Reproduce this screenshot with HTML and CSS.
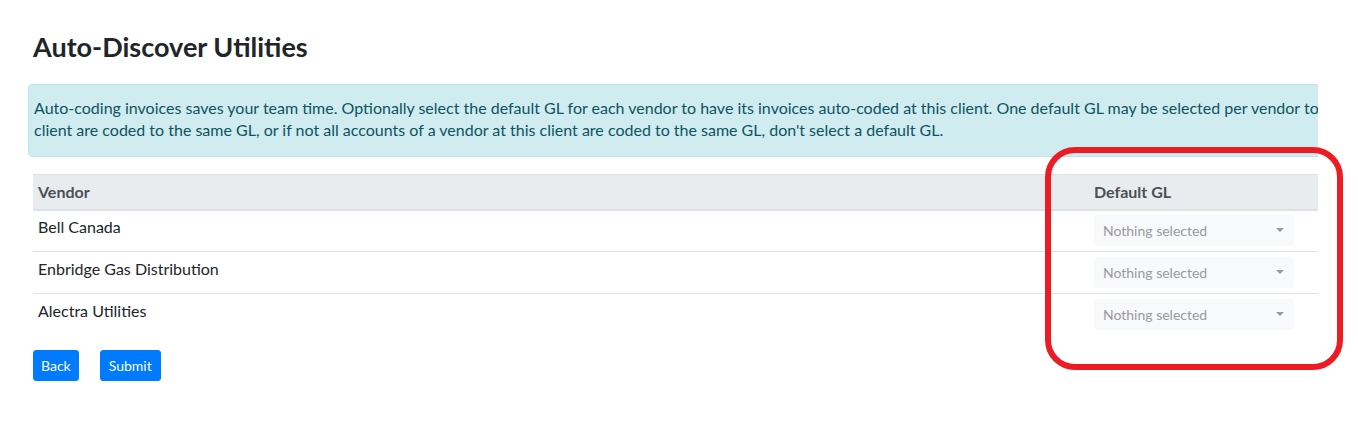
FILE: index.html
```html
<!DOCTYPE html>
<html lang="en">
<head>
<meta charset="utf-8">
<title>Auto-Discover Utilities</title>
<link rel="stylesheet" href="styles.css">
</head>
<body>
<div class="page">
  <h3 class="title">Auto-Discover Utilities</h3>
  <div class="clip">
    <div class="alert">Auto-coding invoices saves your team time. Optionally select the default GL for each vendor to have its invoices auto-coded at this client. One default GL may be selected per vendor to auto-code all of its invoices. If you are unsure whether all accounts of a vendor at this<br>client are coded to the same GL, or if not all accounts of a vendor at this client are coded to the same GL, don't select a default GL.</div>
    <table class="grid">
      <thead>
        <tr><th class="col-vendor">Vendor</th><th class="col-gl">Default GL</th></tr>
      </thead>
      <tbody>
        <tr><td>Bell Canada</td><td><div class="picker"><span>Nothing selected</span><i class="caret"></i></div></td></tr>
        <tr><td>Enbridge Gas Distribution</td><td><div class="picker"><span>Nothing selected</span><i class="caret"></i></div></td></tr>
        <tr><td>Alectra Utilities</td><td><div class="picker"><span>Nothing selected</span><i class="caret"></i></div></td></tr>
      </tbody>
    </table>
  </div>
  <div class="actions">
    <button class="btn">Back</button>
    <button class="btn">Submit</button>
  </div>
</div>
<div class="annotation"></div>
</body>
</html>
```
FILE: styles.css
```css
html, body {
  margin: 0;
  padding: 0;
  background: #fff;
}
body {
  font-family: Lato, "Open Sans", sans-serif;
  font-size: 16px;
  line-height: 24px;
  color: #212529;
  width: 1358px;
  height: 443px;
  overflow: hidden;
}
.page {
  padding: 0 0 0 28px;
}
.title {
  margin: 30px 0 20px 5px;
  font-size: 27px;
  line-height: 34px;
  font-weight: 700;
  color: #212529;
}
.clip {
  width: 1290px;
  overflow: hidden;
}
.alert {
  width: 1700px;
  white-space: nowrap;
  background: #d1ecf1;
  border: 1px solid #bee5eb;
  border-radius: 4px;
  color: #0c5460;
  font-size: 16px;
  line-height: 22px;
  padding: 12px 5px 15px;
  margin-bottom: 17px;
}
.grid {
  margin-left: 5px;
  width: 1285px;
  border-collapse: collapse;
}
.grid th {
  text-align: left;
  background: #e9ecef;
  color: #495057;
  font-weight: 700;
  line-height: 21px;
  border-top: 1px solid #dee2e6;
  border-bottom: 2px solid #dee2e6;
  padding: 6px 5px 7px;
}
.col-gl {
  width: 219px;
}
.grid td {
  vertical-align: top;
  padding: 4px 5px 5px;
  border-top: 1px solid #dee2e6;
}
.grid tbody tr:first-child td {
  border-top: 0;
}
.grid tbody tr + tr td {
  padding-top: 5px;
}
.picker {
  width: 200px;
  height: 31px;
  box-sizing: border-box;
  background: #f8f9fa;
  border-radius: 4px;
  color: #999;
  font-size: 14px;
  padding: 0 10px 0 9px;
  display: flex;
  align-items: center;
  justify-content: space-between;
  line-height: 31px;
}
.caret {
  width: 0;
  height: 0;
  border-left: 4px solid transparent;
  border-right: 4px solid transparent;
  border-top: 4px solid #999;
  margin-top: -2px;
}
.actions {
  margin: 15px 0 0 5px;
  display: flex;
  gap: 21px;
}
.btn {
  font-family: inherit;
  font-size: 14px;
  line-height: 21px;
  height: 31px;
  padding: 0 7px;
  color: #fff;
  background: #007bff;
  border: 1px solid #007bff;
  border-radius: 3px;
}
.btn + .btn {
  padding: 0 8px;
}
.annotation {
  position: absolute;
  left: 1045px;
  top: 147px;
  width: 298px;
  height: 223px;
  box-sizing: border-box;
  border: 6.5px solid #ed1c24;
  border-radius: 30px;
  pointer-events: none;
}
```
